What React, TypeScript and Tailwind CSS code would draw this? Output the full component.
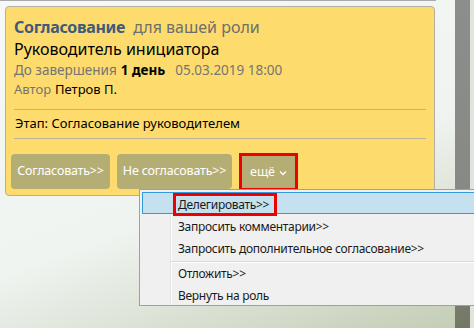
const font = { fontFamily: '"Noto Sans", "Open Sans", sans-serif' };

function ActionButton({ label }: { label: string }) {
  return (
    <button className="flex h-[35px] w-full items-center justify-center whitespace-nowrap rounded-[4px] bg-[#b5ae74] text-[12.5px] tracking-[-0.2px] text-white">
      {label}
    </button>
  );
}

function MenuItem({ label }: { label: string }) {
  return (
    <div className="flex h-[22px] items-center whitespace-nowrap pl-[36px] text-[12px] tracking-[-0.3px] text-[#1a1a1a]">
      {label}
    </div>
  );
}

export default function App() {
  return (
    <div
      className="relative flex h-[328px] w-[474px] overflow-hidden bg-[linear-gradient(160deg,#f6f9f7_0%,#eff4f0_55%,#c3ccb4_100%)]"
      style={font}
    >
      <div className="w-[455px]">
        <div className="h-px w-[436px] bg-[#a9aba9]" />
        <div className="ml-[5px] mt-[5px] w-[430px] rounded-[4px] border border-[#b3b0a3] bg-[#fddc6d] pb-[4px]">
          <div className="px-2 pt-2">
            <div className="flex h-[23px] items-center gap-[8px] text-[16px]">
              <span className="font-bold tracking-[-0.3px] text-[#3e5b7c]">Согласование</span>
              <span className="text-[#6e6e6e]">для вашей роли</span>
            </div>
            <div className="flex h-[22px] items-center text-[16px] text-black">
              Руководитель инициатора
            </div>
            <div className="flex h-[20px] items-center text-[13.5px]">
              <span className="text-[#747474]">До завершения</span>
              <span className="ml-[4px] font-bold text-black">1 день</span>
              <span className="ml-[10px] text-[#747474]">05.03.2019 18:00</span>
            </div>
            <div className="flex h-[20px] items-center text-[13px]">
              <span className="text-[#747474]">Автор</span>
              <span className="ml-[4px] text-black">Петров П.</span>
            </div>
          </div>
          <div className="mx-2 mt-[9px] h-px bg-[#b8b29c]" />
          <div className="flex h-[28px] items-center pl-[9px] text-[13px] text-black">
            Этап: Согласование руководителем
          </div>
          <div className="mx-2 h-px bg-[#b8b29c]" />
          <div className="mt-[15px] flex items-start gap-[7px] pl-[5px]">
            <div className="w-[99px]">
              <ActionButton label="Согласовать>>" />
            </div>
            <div className="w-[115px]">
              <ActionButton label="Не согласовать>>" />
            </div>
            <button className="-mt-px flex h-[38px] w-[59px] items-center justify-center gap-[4px] border-[3px] border-[#ee0000] bg-[#b5ae74] text-[12.5px] text-white">
              ещё
              <svg width="8" height="6" viewBox="0 0 8 6" className="mt-[2px]">
                <path d="M1 1.5 L4 4.5 L7 1.5" fill="none" stroke="white" strokeWidth="1.3" />
              </svg>
            </button>
          </div>
        </div>
      </div>
      <div className="h-full w-[15px] bg-[linear-gradient(180deg,#8c8e8b_0%,#868984_60%,#737866_100%)]" />
      <div className="h-full flex-1 bg-[#dfe4dd]" />

      <div className="absolute left-[139px] top-[189px] h-[117px] w-[340px] border border-[#a0a0a0] bg-[#f0f0f0] p-[2px]">
        <div className="absolute bottom-[2px] left-[30px] top-[2px] w-px bg-[#e2e2e2]" />
        <div className="absolute bottom-[2px] left-[31px] top-[2px] w-px bg-white" />
        <div className="relative h-[22px] border border-[#3399dd] bg-[#c5e0ef]">
          <div className="absolute left-[30px] top-0 flex h-[23px] w-[104px] items-center whitespace-nowrap border-[3px] border-[#ee0000] pl-[2px] text-[12px] tracking-[-0.3px] text-[#1a1a1a]">
            Делегировать&gt;&gt;
          </div>
        </div>
        <div className="relative mt-px h-[23px]">
          <div className="flex h-[23px] items-center whitespace-nowrap pl-[36px] text-[12px] tracking-[-0.3px] text-[#1a1a1a]">
            Запросить комментарии&gt;&gt;
          </div>
        </div>
        <div className="relative">
          <MenuItem label="Запросить дополнительное согласование>>" />
        </div>
        <div className="relative ml-[29px] mt-[1px] h-px bg-[#d7d7d7]" />
        <div className="relative ml-[29px] h-px bg-white" />
        <div className="relative">
          <MenuItem label="Отложить>>" />
        </div>
        <div className="relative">
          <MenuItem label="Вернуть на роль" />
        </div>
      </div>
    </div>
  );
}
